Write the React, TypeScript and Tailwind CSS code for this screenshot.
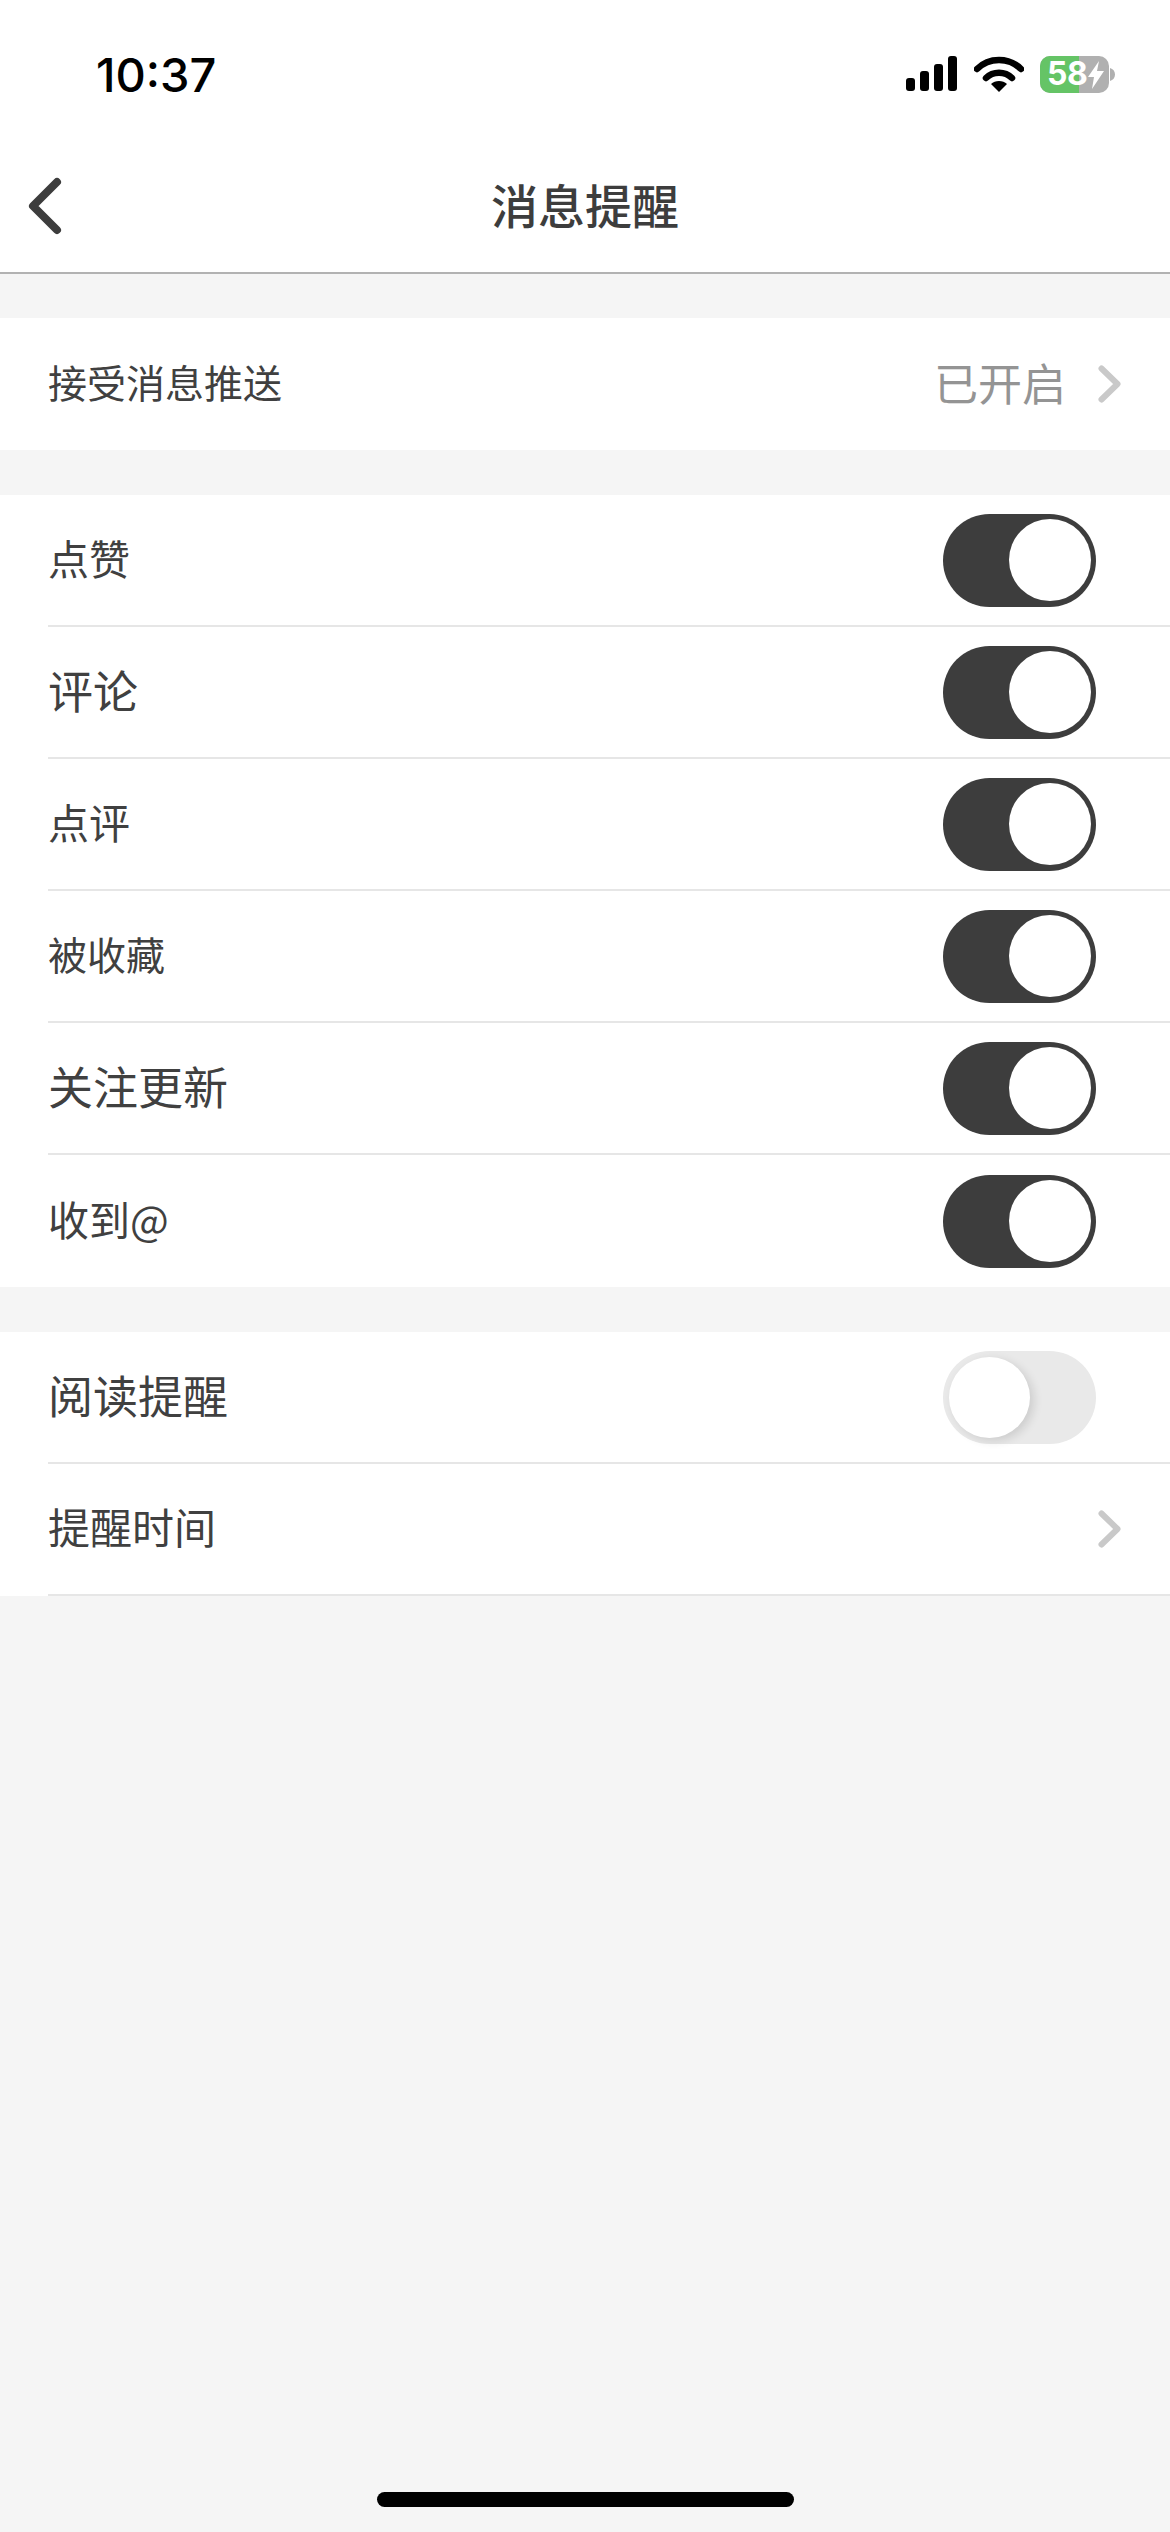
const cjk = "font-['Noto_Sans_CJK_SC','Noto_Sans',sans-serif]";

function Chevron() {
  return (
    <svg className="h-[38px] w-[24px]" viewBox="0 0 24 38" fill="none">
      <path
        d="M4.5 3.5 L20.5 19 L4.5 34.5"
        stroke="#c9c9c9"
        strokeWidth="6"
        strokeLinecap="round"
        strokeLinejoin="round"
      />
    </svg>
  );
}

function Toggle({ on }: { on: boolean }) {
  return on ? (
    <div className="mr-[74px] flex h-[93px] w-[153px] items-center justify-end rounded-full bg-[#3d3d3d] pr-[5px]">
      <div className="h-[82px] w-[82px] rounded-full bg-white" />
    </div>
  ) : (
    <div className="mr-[74px] flex h-[93px] w-[153px] items-center justify-start rounded-full bg-[#e9e9e9] pl-[6px]">
      <div className="h-[81px] w-[81px] rounded-full bg-white shadow-[4px_3px_10px_rgba(0,0,0,0.12)]" />
    </div>
  );
}

type RowProps = {
  label: string;
  size: string;
  on?: boolean;
  value?: string;
  chevron?: boolean;
  divider?: boolean;
};

function Row({ label, size, on, value, chevron, divider = true }: RowProps) {
  return (
    <div className="ml-12">
      <div
        className={
          "flex h-[132px] items-center justify-between " +
          (divider ? "border-b-2 border-[#e6e6e6]" : "")
        }
      >
        <span className={"mb-[6px] leading-none text-[#404040] " + size}>{label}</span>
        {on !== undefined && <Toggle on={on} />}
        {chevron && (
          <div className="mr-[49px] flex items-center">
            {value && (
              <span className="mb-[4px] mr-[31px] text-[44px] leading-none text-[#949494]">{value}</span>
            )}
            <Chevron />
          </div>
        )}
      </div>
    </div>
  );
}

function StatusIcons() {
  return (
    <div className="mr-[55px] flex items-center">
      {/* signal */}
      <svg className="h-[36px] w-[52px]" viewBox="0 0 52 36" fill="#000">
        <rect x="0" y="22" width="9" height="13" rx="3" />
        <rect x="14" y="15" width="9" height="20" rx="3" />
        <rect x="28" y="8" width="9" height="27" rx="3" />
        <rect x="42" y="0" width="9" height="35" rx="3" />
      </svg>
      {/* wifi */}
      <svg className="ml-[16px] h-[36px] w-[50px]" viewBox="0 0 50 36" fill="none">
        <path d="M3 13 C15 1 35 1 47 13" stroke="#000" strokeWidth="6.5" strokeLinecap="round" />
        <path d="M12 22 C19 15 31 15 38 22" stroke="#000" strokeWidth="6.5" strokeLinecap="round" />
        <path d="M17 28 C21 24 29 24 33 28 L25 36 Z" fill="#000" />
      </svg>
      {/* battery */}
      <div className="relative ml-[16px] flex h-[37px] w-[69px] items-center rounded-[10px] bg-[#b0b0b0]">
        <div className="h-full w-[39px] rounded-l-[10px] bg-[#65c466]" />
        <span className="absolute left-[7px] font-['Inter',sans-serif] text-[32px] font-bold leading-none tracking-[-0.5px] text-white">
          58
        </span>
        <svg className="absolute left-[48px] top-[5px] h-[28px] w-[16px]" viewBox="0 0 16 28" fill="#fff">
          <path d="M11 0 L0 16 H6 L4 28 L16 10 H9 Z" />
        </svg>
      </div>
      <svg className="ml-[1px] h-[13px] w-[5px]" viewBox="0 0 5 13" fill="#b0b0b0">
        <path d="M0 0 C3 1 5 3 5 6.5 C5 10 3 12 0 13 Z" />
      </svg>
    </div>
  );
}

export default function App() {
  return (
    <div className={"flex min-h-[2532px] w-[1170px] flex-col bg-[#f5f5f5] " + cjk}>
      <div className="h-[274px] border-b-2 border-[#b2b2b2] bg-white">
        {/* status bar */}
        <div className="flex h-[148px] items-center justify-between">
          <span className="ml-[96px] font-['Inter',sans-serif] text-[47px] font-medium leading-none text-black">
            10:37
          </span>
          <StatusIcons />
        </div>
        {/* nav */}
        <div className="relative flex h-[124px] items-center justify-center pb-[14px]">
          <svg className="absolute left-[24px] top-[27px] h-[62px] w-[38px]" viewBox="0 0 38 62" fill="none">
            <path
              d="M33 7 L9 31 L33 55"
              stroke="#3d3d3d"
              strokeWidth="8"
              strokeLinecap="round"
              strokeLinejoin="round"
            />
          </svg>
          <span className="text-[47px] font-medium leading-none text-[#3d3d3d]">消息提醒</span>
        </div>
      </div>

      <div className="mt-[44px] bg-white">
        <Row label="接受消息推送" size="text-[39px]" value="已开启" chevron divider={false} />
      </div>

      <div className="mt-[45px] bg-white">
        <Row label="点赞" size="text-[41px]" on />
        <Row label="评论" size="text-[45px]" on />
        <Row label="点评" size="text-[41px]" on />
        <Row label="被收藏" size="text-[39px]" on />
        <Row label="关注更新" size="text-[45px]" on />
        <Row label="收到@" size="text-[41px]" on divider={false} />
      </div>

      <div className="mt-[45px] bg-white">
        <Row label="阅读提醒" size="text-[45px]" on={false} />
        <Row label="提醒时间" size="text-[42px]" chevron />
      </div>

      <div className="mt-auto flex justify-center pb-[25px]">
        <div className="h-[15px] w-[417px] rounded-full bg-black" />
      </div>
    </div>
  );
}
